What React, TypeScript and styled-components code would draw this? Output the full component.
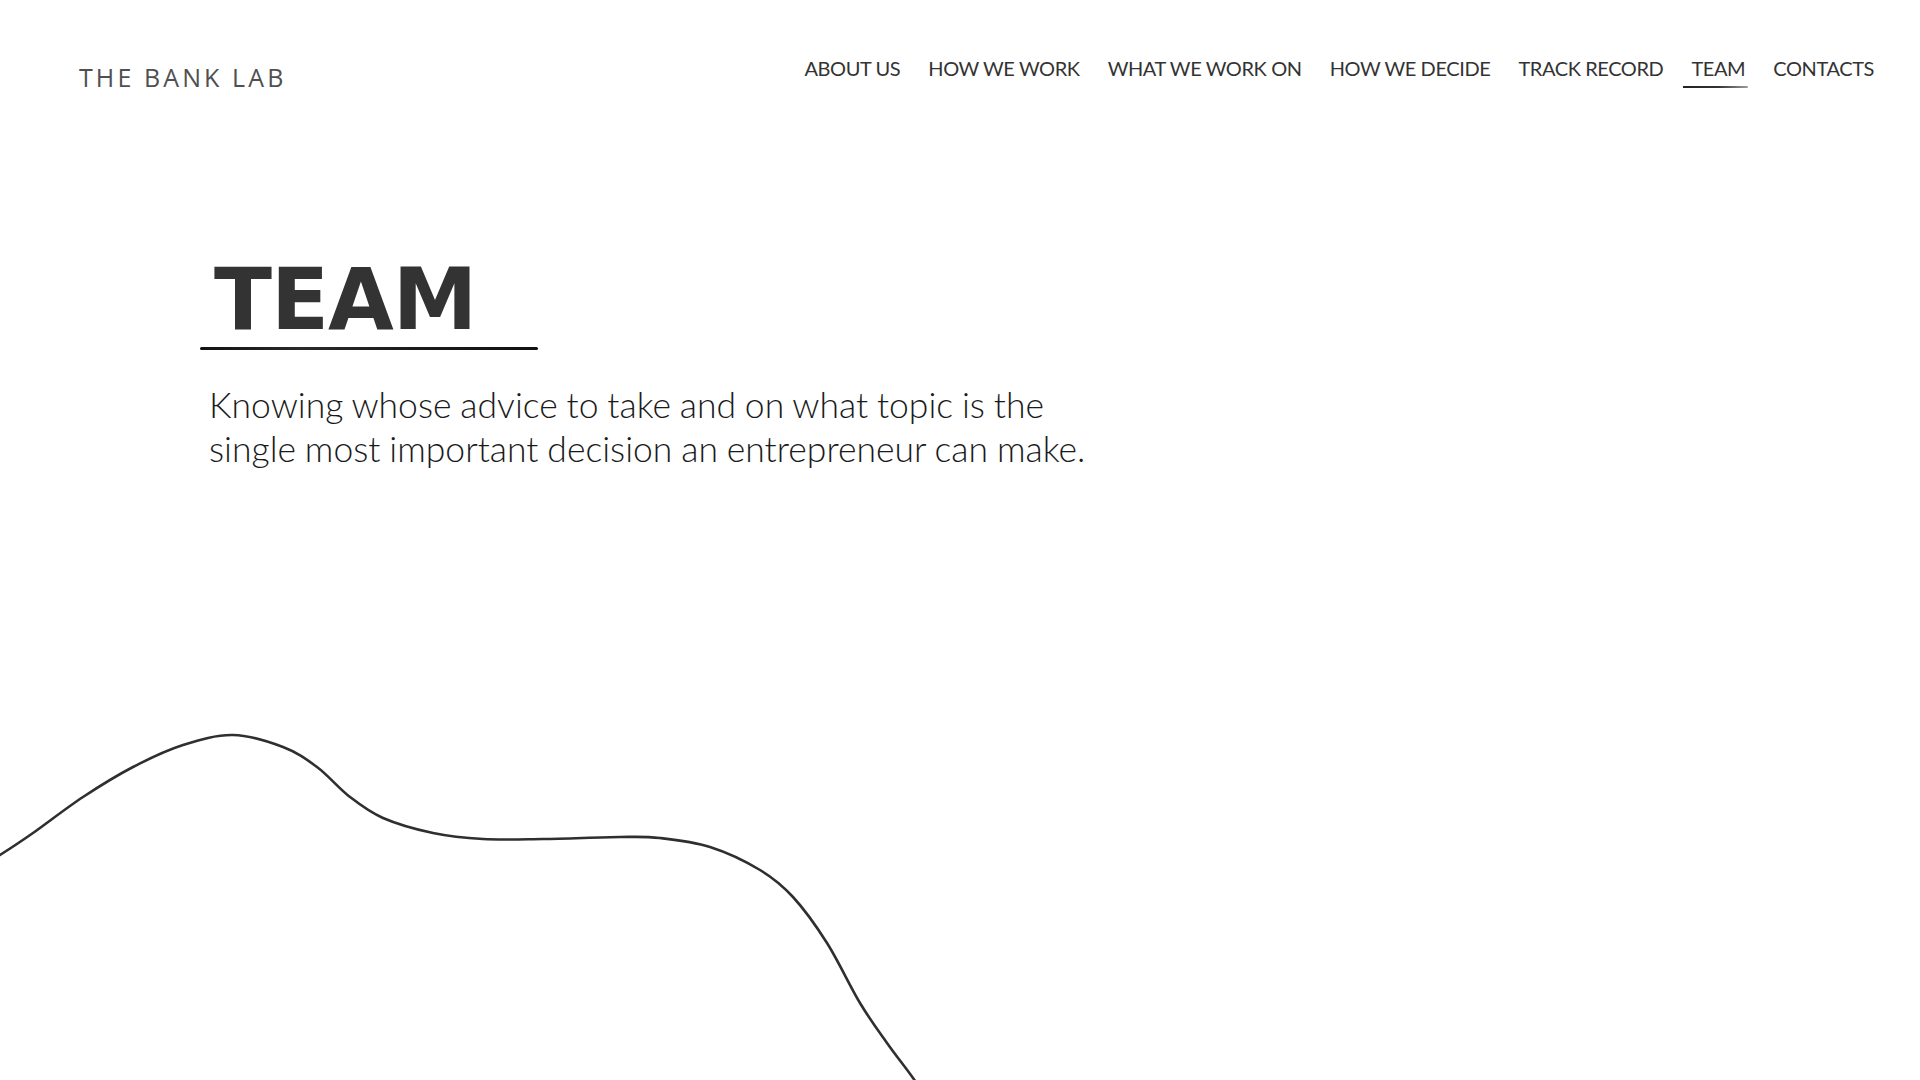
import React from 'react';
import styled, { createGlobalStyle } from 'styled-components';

const GlobalStyle = createGlobalStyle`
  html, body {
    margin: 0;
    padding: 0;
    background: #fff;
  }
  body {
    font-family: Lato, "Open Sans", sans-serif;
    color: #333;
  }
  a {
    text-decoration: none;
    color: inherit;
  }
`;

const navItems = [
  'ABOUT US',
  'HOW WE WORK',
  'WHAT WE WORK ON',
  'HOW WE DECIDE',
  'TRACK RECORD',
  'TEAM',
  'CONTACTS',
];

// points traced off the hand-drawn line, page coordinates
const wavePoints: [number, number][] = [
  [-40, 880], [0, 855], [33, 833], [83, 797], [133, 767], [183, 745], [233, 735],
  [283, 747], [317, 767], [350, 797], [383, 818], [433, 833], [483, 839],
  [543, 839], [620, 837], [660, 838], [710, 847], [760, 870], [793, 897],
  [827, 943], [860, 1003], [887, 1043], [913, 1078], [935, 1110],
];

const smoothPath = (pts: [number, number][]) => {
  let d = `M${pts[0][0]} ${pts[0][1]}`;
  for (let i = 0; i < pts.length - 1; i++) {
    const p0 = pts[i - 1] || pts[i];
    const p1 = pts[i];
    const p2 = pts[i + 1];
    const p3 = pts[i + 2] || p2;
    const c1x = p1[0] + (p2[0] - p0[0]) / 6;
    const c1y = p1[1] + (p2[1] - p0[1]) / 6;
    const c2x = p2[0] - (p3[0] - p1[0]) / 6;
    const c2y = p2[1] - (p3[1] - p1[1]) / 6;
    d += ` C${c1x.toFixed(1)} ${c1y.toFixed(1)}, ${c2x.toFixed(1)} ${c2y.toFixed(1)}, ${p2[0]} ${p2[1]}`;
  }
  return d;
};

export default function App() {
  return (
    <Page>
      <GlobalStyle />
      <Header>
        <Logo href="#">THE BANK LAB</Logo>
        <Nav>
          {navItems.map((item) => (
            <NavLink key={item} href="#" $active={item === 'TEAM'}>
              {item}
            </NavLink>
          ))}
        </Nav>
      </Header>

      <Hero>
        <Title>TEAM</Title>
        <Rule />
        <Lead>
          Knowing whose advice to take and on what topic is the
          <br />
          single most important decision an entrepreneur can make.
        </Lead>
      </Hero>

      <WaveWrap>
        <svg width="1920" height="360" viewBox="0 720 1920 360" fill="none">
          <path d={smoothPath(wavePoints)} stroke="#2f2f2f" strokeWidth="2.6" strokeLinecap="round" />
        </svg>
      </WaveWrap>
    </Page>
  );
}

const Page = styled.div`
  height: 100vh;
  display: flex;
  flex-direction: column;
  overflow: hidden;
`;

const Header = styled.header`
  display: flex;
  justify-content: space-between;
  align-items: flex-start;
  padding: 0 46px 0 79px;
`;

const Logo = styled.a`
  margin-top: 62px;
  font-family: "Open Sans", "Noto Sans", sans-serif;
  font-size: 25px;
  line-height: 30px;
  letter-spacing: 3.1px;
  color: #505050;
`;

const Nav = styled.nav`
  display: flex;
  gap: 28px;
  margin-top: 56px;
`;

const NavLink = styled.a<{ $active?: boolean }>`
  position: relative;
  font-family: Lato, sans-serif;
  font-size: 20px;
  line-height: 24px;
  letter-spacing: -0.4px;
  color: #333;

  &::after {
    content: '';
    display: ${(p) => (p.$active ? 'block' : 'none')};
    position: absolute;
    left: -8px;
    right: -3px;
    top: 30px;
    height: 2px;
    border-radius: 1px 2px 2px 1px;
    background: linear-gradient(90deg, #222 0%, #333 55%, rgba(60, 60, 60, 0.5) 100%);
  }
`;

const Hero = styled.section`
  padding-left: 200px;
  margin-top: 165px;
`;

const Title = styled.h1`
  margin: 0;
  padding-left: 14px;
  font-family: "DejaVu Sans", "Open Sans", sans-serif;
  font-weight: 700;
  font-size: 85px;
  line-height: 85px;
  letter-spacing: -1px;
  color: #333;
`;

const Rule = styled.div`
  width: 338px;
  height: 3px;
  margin-top: 5px;
  border-radius: 2px;
  background: linear-gradient(90deg, #111 0%, #2a2a2a 30%, #1c1c1c 60%, #111 100%);
`;

const Lead = styled.p`
  margin: 33px 0 0 9px;
  font-family: Lato, sans-serif;
  font-weight: 300;
  font-size: 35.5px;
  line-height: 44px;
  word-spacing: -0.8px;
  color: #1a1a1a;
`;

const WaveWrap = styled.div`
  margin-top: auto;
  height: 360px;
  flex-shrink: 0;

  svg {
    display: block;
  }
`;
